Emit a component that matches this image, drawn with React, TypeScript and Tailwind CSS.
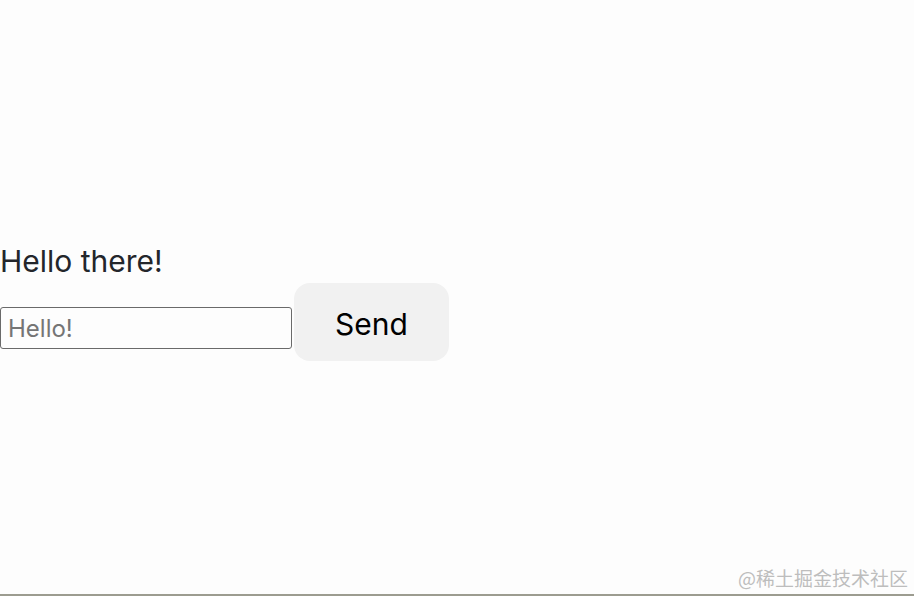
import React from "react";

export default function App() {
  return (
    <div className="relative w-[914px] h-[596px] bg-[#fdfdfd] border-b-2 border-[#9c9c90] overflow-hidden font-['Inter',sans-serif]">
      <div className="flex flex-col pt-[243px]">
        <div className="text-[30px] leading-[36px] text-[#23262b]">Hello there!</div>
        <div className="flex items-start mt-[4px]">
          <input
            className="mt-[24px] w-[292px] h-[42px] border border-[#6a6a6a] rounded-[3px] pl-[7px] text-[24px] bg-transparent outline-none font-['Inter',sans-serif] placeholder:text-[#757575]"
            placeholder="Hello!"
          />
          <button className="ml-[2px] w-[155px] h-[78px] pt-[5px] rounded-[16px] bg-[#f1f1f1] text-[30px] text-black flex items-center justify-center font-['Inter',sans-serif]">
            Send
          </button>
        </div>
      </div>
      <div className="absolute right-[6px] bottom-[4px] text-[19px] leading-[24px] text-[#bdbdbd] font-['Noto_Sans_CJK_SC',sans-serif]">
        @稀土掘金技术社区
      </div>
    </div>
  );
}
